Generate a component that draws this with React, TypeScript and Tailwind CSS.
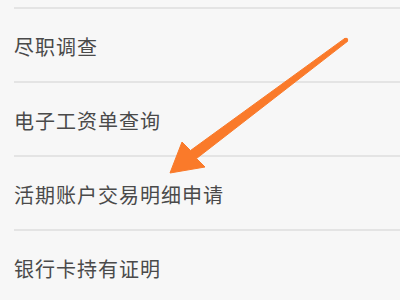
// 列表截图：四行菜单 + 橙色指示箭头（覆盖层）
const items = ["尽职调查", "电子工资单查询", "活期账户交易明细申请", "银行卡持有证明"];

export default function App() {
  return (
    <div className="relative h-[300px] w-[400px] overflow-hidden bg-[#f7f7f7] font-['Noto_Sans_CJK_SC',sans-serif] text-[#4a4a4a]">
      <div className="pl-[14px]">
        <div className="h-[9px] border-b-2 border-[#e4e4e4]" />
        {items.map((t) => (
          <div key={t} className="flex h-[74px] items-center border-b-2 border-[#e4e4e4] pt-[3px] text-[20px] tracking-[1px]">
            {t}
          </div>
        ))}
      </div>
      <svg className="absolute left-0 top-0" width="400" height="300" viewBox="0 0 400 300">
        <polygon
          points="344.8,38.4 190.5,150.5 182,142 170,173 205,167 196.5,158.5 347.2,41.6"
          fill="#fa7a2a"
          stroke="#fa7a2a"
          strokeWidth="1"
          strokeLinejoin="round"
        />
        <circle cx="346" cy="40" r="2.2" fill="#fa7a2a" />
      </svg>
    </div>
  );
}
